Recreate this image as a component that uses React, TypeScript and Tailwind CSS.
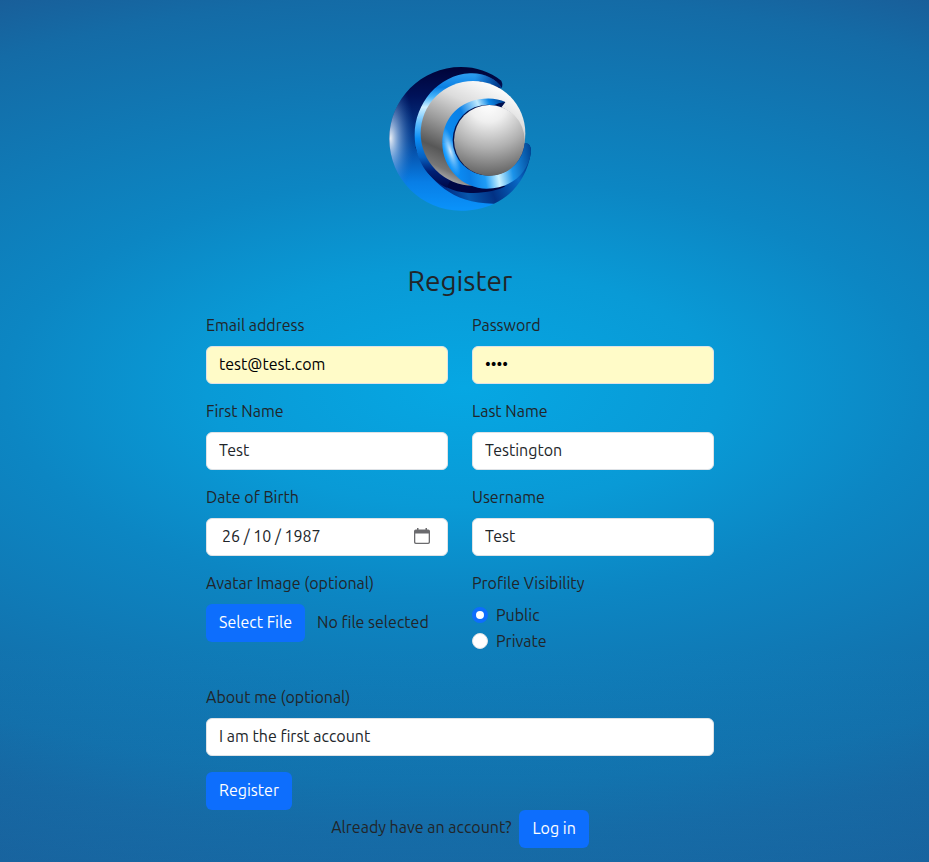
import { useRef, useState } from "react";
import type { InputHTMLAttributes, ReactNode } from "react";

const control =
  "block h-[38px] w-full rounded-md border border-[#dee2e6] px-3 pb-[2px] text-[#212529] outline-none focus:ring-4 focus:ring-[#0d6efd]/25";
const button =
  "h-[38px] rounded-md bg-[#0d6efd] px-[13px] pb-[2px] text-white hover:bg-[#0b5ed7]";

function Logo() {
  return (
    <svg viewBox="0 0 480 495" className="h-[165px] w-[160px]" role="img" aria-label="Logo">
      <defs>
        <linearGradient id="shell" x1="0" y1="0" x2="0" y2="1">
          <stop offset="0" stopColor="#000338" />
          <stop offset="0.2" stopColor="#001259" />
          <stop offset="0.5" stopColor="#053f92" />
          <stop offset="0.8" stopColor="#087ee6" />
          <stop offset="1" stopColor="#0a93fb" />
        </linearGradient>
        <radialGradient id="glow" gradientUnits="userSpaceOnUse" cx="0" cy="0" r="1" gradientTransform="translate(32 250) scale(72 190)">
          <stop offset="0" stopColor="#fff" stopOpacity="0.9" />
          <stop offset="0.3" stopColor="#b9d6f5" stopOpacity="0.6" />
          <stop offset="1" stopColor="#1467c0" stopOpacity="0" />
        </radialGradient>
        <linearGradient id="ring" gradientUnits="userSpaceOnUse" x1="0" y1="55" x2="0" y2="405">
          <stop offset="0" stopColor="#2d9df0" />
          <stop offset="0.12" stopColor="#0a80e4" />
          <stop offset="0.2" stopColor="#45b4fb" />
          <stop offset="0.29" stopColor="#d2f1ff" />
          <stop offset="0.42" stopColor="#63c0ff" />
          <stop offset="0.56" stopColor="#0a8df5" />
          <stop offset="0.72" stopColor="#0660c0" />
          <stop offset="0.84" stopColor="#001f75" />
          <stop offset="1" stopColor="#000744" />
        </linearGradient>
        <linearGradient id="ringTip" gradientUnits="userSpaceOnUse" x1="285" y1="0" x2="366" y2="0">
          <stop offset="0" stopColor="#003a90" stopOpacity="0" />
          <stop offset="1" stopColor="#002a78" />
        </linearGradient>
        <linearGradient id="ball" gradientUnits="userSpaceOnUse" x1="330" y1="78" x2="185" y2="392">
          <stop offset="0" stopColor="#fff" />
          <stop offset="0.25" stopColor="#dcdcdc" />
          <stop offset="0.5" stopColor="#989898" />
          <stop offset="0.72" stopColor="#575757" />
          <stop offset="0.86" stopColor="#777" />
          <stop offset="1" stopColor="#d0d0d0" />
        </linearGradient>
        <radialGradient id="smallBall" gradientUnits="userSpaceOnUse" cx="325" cy="145" r="225">
          <stop offset="0" stopColor="#fff" />
          <stop offset="0.25" stopColor="#efefef" />
          <stop offset="0.6" stopColor="#b0b0b0" />
          <stop offset="1" stopColor="#5c5c5c" />
        </radialGradient>
        <linearGradient id="swoosh" gradientUnits="userSpaceOnUse" x1="180" y1="400" x2="450" y2="300">
          <stop offset="0" stopColor="#00237c" />
          <stop offset="0.25" stopColor="#0757ac" />
          <stop offset="0.5" stopColor="#023184" />
          <stop offset="0.8" stopColor="#0869c6" />
          <stop offset="1" stopColor="#00297a" />
        </linearGradient>
        <linearGradient id="hook" gradientUnits="userSpaceOnUse" x1="200" y1="330" x2="453" y2="290">
          <stop offset="0" stopColor="#0b96ff" />
          <stop offset="0.25" stopColor="#0a7fe6" />
          <stop offset="0.42" stopColor="#1f9cf5" />
          <stop offset="0.58" stopColor="#c9f1ff" />
          <stop offset="0.75" stopColor="#1c94ea" />
          <stop offset="1" stopColor="#004796" />
        </linearGradient>
        <linearGradient id="hookTop" gradientUnits="userSpaceOnUse" x1="187" y1="220" x2="376" y2="140">
          <stop offset="0" stopColor="#0a8bf2" />
          <stop offset="0.35" stopColor="#0a80e6" />
          <stop offset="0.62" stopColor="#bfeaff" />
          <stop offset="0.78" stopColor="#0b86e6" />
          <stop offset="1" stopColor="#003c8c" />
        </linearGradient>
        <radialGradient id="hookGlow" gradientUnits="userSpaceOnUse" cx="0" cy="0" r="1" gradientTransform="translate(211 288) rotate(-18) scale(20 80)">
          <stop offset="0" stopColor="#fff" stopOpacity="0.8" />
          <stop offset="1" stopColor="#7dccff" stopOpacity="0" />
        </radialGradient>
      </defs>
      <path d="M366 99Q370 88 364 77C330 50 288 36 243 36C124 36 28 133 28 252S124 467 243 467C280 467 312 460 342 446L250 380L150 260L240 100Z" fill="url(#shell)" />
      <path d="M364 77C330 50 288 36 243 36C124 36 28 133 28 252S124 467 243 467C280 467 312 460 342 446L250 380L150 260L200 130Z" fill="url(#glow)" />
      <path d="M118 310C150 375 215 447 342 446C400 420 442 365 453 292Q454 262 432 265L300 380L180 300Z" fill="url(#swoosh)" />
      <path d="M106 275C128 350 180 406 260 413C310 416 350 408 376 394L330 370L180 270Z" fill="#000744" />
      <path d="M366 99C346 70 310 53 270 55C175 60 104 145 104 240C104 315 143 370 200 398L250 300L240 120L300 79Z" fill="url(#ring)" />
      <path d="M366 99C346 70 310 53 280 55L280 79L340 92Z" fill="url(#ringTip)" />
      <circle cx="279" cy="235" r="157" fill="url(#ball)" />
      <path d="M434 265Q454 262 453 292C444 360 388 401 320 401C248 401 187 340 187 264L221 256C221 314 268 362 327 362C385 362 430 320 434 265Z" fill="url(#hook)" />
      <path d="M376 141C356 131 326 128 298 133C230 144 187 196 187 265L221 257C221 198 268 151 327 151L364 156Z" fill="url(#hookTop)" />
      <path d="M298 133C230 144 187 196 187 264C187 340 248 401 320 401L300 362C250 350 221 314 221 256Z" fill="url(#hookGlow)" />
      <path d="M376 141L364 157L342 151L356 145Z" fill="#000f4d" />
      <circle cx="324" cy="255" r="106" fill="#001250" />
      <circle cx="328" cy="256" r="106" fill="url(#smallBall)" />
    </svg>
  );
}

function Field({ id, label, children }: { id: string; label: string; children: ReactNode }) {
  return (
    <div className="flex flex-col gap-[9px]">
      <label htmlFor={id}>{label}</label>
      {children}
    </div>
  );
}

function TextField({
  id,
  label,
  filled = false,
  ...rest
}: { id: string; label: string; filled?: boolean } & InputHTMLAttributes<HTMLInputElement>) {
  return (
    <Field id={id} label={label}>
      <input id={id} name={id} {...rest} className={filled ? `${control} bg-[#fffbc8] text-black` : `${control} bg-white`} />
    </Field>
  );
}

function Radio({ value, label, defaultChecked }: { value: string; label: string; defaultChecked?: boolean }) {
  return (
    <label className="flex items-center gap-2">
      <input
        type="radio"
        name="visibility"
        value={value}
        defaultChecked={defaultChecked}
        className="size-4 appearance-none rounded-full border border-[#dee2e6] bg-white checked:border-[4px] checked:border-[#0d6efd]"
      />
      {label}
    </label>
  );
}

function CalendarIcon() {
  return (
    <svg viewBox="0 0 16 16" className="size-4" aria-hidden="true">
      <path d="M3 0h1.500v1.500h7V0H13v1.500h1.200Q16 1.500 16 3.300v10.900Q16 16 14.200 16H1.800Q0 16 0 14.200V3.300Q0 1.500 1.800 1.500H3zM1.300 5.500V14q0 .7.7.7h12q.7 0 .7-.7V5.500z" fill="#6b6b6e" fillRule="evenodd" />
    </svg>
  );
}

export default function App() {
  const picker = useRef<HTMLInputElement>(null);
  const [fileName, setFileName] = useState("No file selected");

  return (
    <div className="min-h-screen bg-[linear-gradient(to_bottom,rgba(6,167,227,0)_75%,rgba(6,167,227,0.22)_100%),radial-gradient(121%_60%_at_50%_45%,#06a7e3_0%,#099ad6_23%,#0c86c3_41%,#146ba6_76%,#195e99_86%,#1d518c_100%)] pr-[9px] font-[Ubuntu,'Noto_Sans',sans-serif] text-base leading-6 text-[#212529]">
      <main className="mx-auto flex max-w-[508px] flex-col pt-[55px] pb-[14px]">
        <div className="flex justify-center">
          <Logo />
        </div>
        <h1 className="mt-11 mb-[15px] text-center text-[28px] leading-[34px]">Register</h1>
        <form className="flex flex-col gap-4" onSubmit={(e) => e.preventDefault()}>
          <div className="grid grid-cols-2 gap-x-6 gap-y-[15px]">
            <TextField id="email" label="Email address" type="email" defaultValue="test@test.com" filled />
            <TextField id="password" label="Password" type="password" defaultValue="test" filled />
            <TextField id="firstName" label="First Name" defaultValue="Test" />
            <TextField id="lastName" label="Last Name" defaultValue="Testington" />
            <Field id="birth" label="Date of Birth">
              <div className="flex h-[38px] items-center rounded-md border border-[#dee2e6] bg-white pr-[17px] pb-[2px] pl-[15px]">
                <input id="birth" name="birth" defaultValue="26 / 10 / 1987" className="min-w-0 flex-1 outline-none" />
                <button type="button" aria-label="Choose date">
                  <CalendarIcon />
                </button>
              </div>
            </Field>
            <TextField id="username" label="Username" defaultValue="Test" />
            <Field id="avatar" label="Avatar Image (optional)">
              <div className="flex items-center gap-3">
                <button type="button" className={button} onClick={() => picker.current?.click()}>
                  Select File
                </button>
                <span className="pb-[2px]">{fileName}</span>
                <input
                  ref={picker}
                  id="avatar"
                  type="file"
                  accept="image/*"
                  className="hidden"
                  onChange={(e) => setFileName(e.target.files?.[0]?.name ?? "No file selected")}
                />
              </div>
            </Field>
            <fieldset className="pb-4">
              <legend className="mb-2">Profile Visibility</legend>
              <div className="flex flex-col gap-[2px]">
                <Radio value="public" label="Public" defaultChecked />
                <Radio value="private" label="Private" />
              </div>
            </fieldset>
          </div>
          <TextField id="about" label="About me (optional)" defaultValue="I am the first account" />
          <button type="submit" className={`${button} self-start`}>
            Register
          </button>
        </form>
        <div className="flex justify-center gap-2">
          <p className="leading-[34px]">Already have an account?</p>
          <button type="button" className={button}>
            Log in
          </button>
        </div>
      </main>
    </div>
  );
}
